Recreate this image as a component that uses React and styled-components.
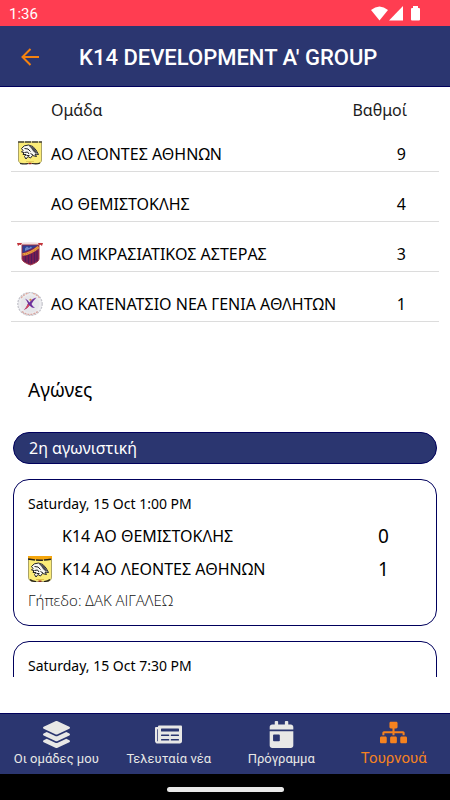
import React from "react";
import styled, { createGlobalStyle } from "styled-components";
import { FaLayerGroup, FaNewspaper, FaCalendarDay, FaSitemap } from "react-icons/fa";

const standings = [
  { team: "ΑΟ ΛΕΟΝΤΕΣ ΑΘΗΝΩΝ", points: 9, crest: "lion" },
  { team: "ΑΟ ΘΕΜΙΣΤΟΚΛΗΣ", points: 4 },
  { team: "ΑΟ ΜΙΚΡΑΣΙΑΤΙΚΟΣ ΑΣΤΕΡΑΣ", points: 3, crest: "shield" },
  { team: "ΑΟ ΚΑΤΕΝΑΤΣΙΟ ΝΕΑ ΓΕΝΙΑ ΑΘΛΗΤΩΝ", points: 1, crest: "round" },
];

const matches = [
  {
    date: "Saturday, 15 Oct 1:00 PM",
    venue: "Γήπεδο: ΔΑΚ ΑΙΓΑΛΕΩ",
    sides: [
      { team: "Κ14 ΑΟ ΘΕΜΙΣΤΟΚΛΗΣ", score: 0 },
      { team: "Κ14 ΑΟ ΛΕΟΝΤΕΣ ΑΘΗΝΩΝ", score: 1, crest: "lionTall" },
    ],
  },
  { date: "Saturday, 15 Oct 7:30 PM", sides: [] },
];

const tabs = [
  { label: "Οι ομάδες μου", Icon: FaLayerGroup },
  { label: "Τελευταία νέα", Icon: FaNewspaper },
  { label: "Πρόγραμμα", Icon: FaCalendarDay },
  { label: "Τουρνουά", Icon: FaSitemap, active: true },
];

const LionHead = () => (
  <g strokeLinejoin="round">
    <path
      d="M4 8 Q6 4.500 11 4.500 Q16 5 18.500 9.500 L21 14 L17.500 13.500 L19 16 L15 15 L13 17.500 L10.500 16 L8.500 18.500 L7 16 L8.500 14 L5.500 14 L6.500 12 L4 11.500 L5.500 10 Z"
      fill="#f7f7f2"
      stroke="#222226"
      strokeWidth="1"
    />
    <path
      d="M11 5 Q15.500 5.500 18 9.500 L20 13 Q17 12.500 15.500 10.500 Q14 7.500 11 5 Z"
      fill="#4b4c50"
    />
    <path
      d="M7 8 L10.500 8.500 L13 11 M7 12 L10 11.500 L11.500 13.500 M9 15 L12 15 M13 13 L15.500 14.500"
      fill="none"
      stroke="#222226"
      strokeWidth="1"
    />
  </g>
);

const Crest = ({ kind }) => {
  if (kind === "lion") {
    return (
      <svg width="26" height="24" viewBox="0 0 26 24" aria-hidden="true">
        <path d="M1.500 1 H24.500 V19 Q24.500 22.500 20 22.500 H6 Q1.500 22.500 1.500 19 Z" fill="#fbec78" stroke="#aaa266" />
        <path d="M1 1 H25" stroke="#4c4a3a" strokeWidth="1.500" strokeDasharray="6 1" />
        <g transform="translate(.5 -.5)">
          <LionHead />
        </g>
        <path d="M3 22.500 Q8 23.500 11 22.500 M15 22.500 Q20 23.500 23 22" stroke="#27251c" strokeWidth="1.200" fill="none" />
        <path d="M9 20.500 H17" stroke="#e3cf5a" />
        <path d="M11.500 22.500 H14.500" stroke="#8c1f1a" strokeWidth="1.500" />
      </svg>
    );
  }
  if (kind === "lionTall") {
    return (
      <svg width="24" height="26" viewBox="0 0 24 26" aria-hidden="true">
        <path d="M.5 .5 H23.500 V21 Q23.500 25.500 18 25.500 H6 Q.5 25.500 .5 21 Z" fill="#fbec78" stroke="#aaa266" />
        <path d="M0 0 H24 V3 Q12 5 0 3 Z" fill="#f5a60c" />
        <path d="M0 3 Q12 5.500 24 3" stroke="#26231a" strokeWidth="1.500" fill="none" strokeDasharray="7 1" />
        <g transform="translate(-.5 2.500)">
          <LionHead />
        </g>
        <path d="M2 23.500 Q4 25.500 8 25.500 M16 25.500 Q20 25.500 22 23.500" stroke="#27251c" strokeWidth="1.200" fill="none" />
        <path d="M8 23.500 H16" stroke="#e0bf48" />
        <path d="M10.500 25.200 H13.500" stroke="#8c1f1a" strokeWidth="1.400" />
      </svg>
    );
  }
  if (kind === "shield") {
    return (
      <svg width="26" height="24" viewBox="0 0 26 24" aria-hidden="true">
        <path d="M0 1 Q13 -.5 26 1 L24.500 3 H1.500 Z" fill="#f0dcdc" />
        <path d="M0 1 L5 1 L4 3 L2.500 2.700 L1 4 Z M26 1 L21 1 L22 3 L23.500 2.700 L25 4 Z" fill="#c2343a" />
        <path d="M5 3 H22 V17 Q22 20 13.500 23 Q5 20 5 17 Z" fill="#7c1d52" stroke="#a33a45" />
        <path d="M5.500 3.500 H21.500 L5.500 11 Z" fill="#2e3f92" />
        <path d="M8 6.500 L10 4.500 L12 6 L14 4.500 L15 6 L8 9 Z" fill="#6f87c6" />
        <path d="M5.500 12.500 Q14 11.500 21.500 5" stroke="#e9a13e" strokeWidth="2.600" fill="none" />
        <path d="M6 12.500 Q14 11.500 21 5.500" stroke="#b5502f" strokeWidth=".7" strokeDasharray="1 1" fill="none" />
        <path d="M8.500 14 V20 M11.500 13 V21.500 M14.500 12 V21.500 M17.500 10 V20.500 M20 9 V19" stroke="#4f1c58" strokeWidth="1.200" />
      </svg>
    );
  }
  if (kind === "round") {
    return (
      <svg width="26" height="24" viewBox="0 0 26 24" aria-hidden="true">
        <ellipse cx="13" cy="12" rx="12.200" ry="11.500" fill="#ededf0" stroke="#c3c3ca" strokeWidth="1.200" strokeDasharray="2 1" />
        <path d="M4 6 Q8 1.500 12 1.200 M16 1.500 Q20 2.500 22.500 6" stroke="#dfa79c" strokeWidth="1.200" strokeDasharray="2 1" fill="none" />
        <path d="M5 19.500 Q13 25.500 21.500 19" stroke="#d8a6a0" strokeWidth="1.400" strokeDasharray="2 1" fill="none" />
        <ellipse cx="13" cy="12" rx="9.500" ry="8.800" fill="#e6e6ea" />
        <path d="M8 6.500 Q11 8 12.500 10.500 Q15 6.500 19.500 5.500 Q16 9 14.500 12 Q15.500 14.500 18 16 Q14.500 16 12.500 13.500 Q10.500 16.500 7 18 Q10 14.500 11 11.500 Q10 9 8 6.500 Z" fill="#6d309b" />
        <path d="M7 18 Q10 14.500 10.800 12 L12.500 13.500 Q10.500 16.500 7 18 Z" fill="#d6485c" />
        <circle cx="13.500" cy="7.800" r="1.100" fill="#d98049" />
      </svg>
    );
  }
  return null;
};

const App = () => {
  return (
    <>
      <GlobalStyle />
      <Screen>
        <StatusBar>
          <span>1:36</span>
          <StatusIcons viewBox="0 0 50 16" aria-hidden="true">
            <path d="M0 4 Q8.500 -3 17 4 L8.500 14.500 Z" />
            <path d="M32 0 V14.500 H18 Z" />
            <path d="M42 0 H47 V2 H48 Q49 2 49 3 V13.500 Q49 14.500 48 14.500 H41 Q40 14.500 40 13.500 V3 Q40 2 41 2 H42 Z" />
          </StatusIcons>
        </StatusBar>
        <Header>
          <BackButton type="button" aria-label="Back">
            <svg width="20" height="20" viewBox="0 0 20 20" aria-hidden="true">
              <path d="M19 9 H2.500 M10.500 1 L2.500 9 L10.500 17" />
            </svg>
          </BackButton>
          <Title>K14 DEVELOPMENT A' GROUP</Title>
        </Header>

        <Content>
          <Table>
            <colgroup>
              <CrestCol />
              <col />
              <PointsCol />
            </colgroup>
            <thead>
              <tr>
                <HeadCell colSpan={2}>Ομάδα</HeadCell>
                <HeadCell $right>Βαθμοί</HeadCell>
              </tr>
            </thead>
            <tbody>
              {standings.map((row) => (
                <tr key={row.team}>
                  <CrestCell>
                    <Crest kind={row.crest} />
                  </CrestCell>
                  <Cell>{row.team}</Cell>
                  <Cell $right>{row.points}</Cell>
                </tr>
              ))}
            </tbody>
          </Table>

          <SectionTitle>Αγώνες</SectionTitle>
          <MatchList>
            <Round>2η αγωνιστική</Round>
            {matches.map((match) => (
              <MatchCard key={match.date}>
                <MatchDate>{match.date}</MatchDate>
                {match.sides.map((side) => (
                  <Side key={side.team}>
                    <Crest kind={side.crest} />
                    <SideName>{side.team}</SideName>
                    <Score>{side.score}</Score>
                  </Side>
                ))}
                {match.venue && <Venue>{match.venue}</Venue>}
              </MatchCard>
            ))}
          </MatchList>
        </Content>

        <TabBar>
          {tabs.map(({ label, Icon, active }) => (
            <Tab key={label} type="button" $active={active}>
              <IconBox $active={active}>
                <Icon />
              </IconBox>
              {label}
            </Tab>
          ))}
        </TabBar>
        <GestureBar>
          <Handle />
        </GestureBar>
      </Screen>
    </>
  );
};

export default App;

const GlobalStyle = createGlobalStyle`
  * {
    box-sizing: border-box;
  }
  body {
    margin: 0;
    background: #fff;
    color: #000;
    font-family: "Noto Sans", "Open Sans", sans-serif;
  }
  button {
    border: 0;
    padding: 0;
    background: none;
    font-family: Roboto, "Noto Sans", sans-serif;
    cursor: pointer;
  }
`;

const Screen = styled.div`
  display: flex;
  flex-direction: column;
  height: 100vh;
`;

const StatusBar = styled.div`
  display: flex;
  flex: none;
  align-items: center;
  justify-content: space-between;
  height: 26px;
  padding: 2px 29px 0 9px;
  background: #ff3d51;
  color: #fff;
  font-family: Roboto, sans-serif;
  font-size: 15px;
`;

const StatusIcons = styled.svg`
  width: 50px;
  height: 16px;
  fill: #fff;
`;

const Header = styled.header`
  display: flex;
  flex: none;
  align-items: center;
  gap: 39px;
  height: 61px;
  padding: 4px 20px 0;
  background: #2b3670;
  border-bottom: 1px solid #00005c;
`;

const BackButton = styled.button`
  display: flex;

  svg {
    fill: none;
    stroke: #f5820f;
    stroke-width: 2;
  }
`;

const Title = styled.h1`
  margin: 0;
  color: #fff;
  font-family: Roboto, sans-serif;
  font-size: 22px;
  font-weight: 500;
  line-height: 28px;
  white-space: nowrap;
`;

const Content = styled.main`
  flex: 1;
  min-height: 0;
  margin-bottom: 36px;
  overflow-y: auto;
  scrollbar-width: none;
`;

const Table = styled.table`
  width: calc(100% - 22px);
  margin: 0 11px;
  border-collapse: collapse;
  table-layout: fixed;
  font-size: 16px;
  line-height: 22px;
`;

const CrestCol = styled.col`
  width: 40px;
`;

const PointsCol = styled.col`
  width: 90px;
`;

const HeadCell = styled.th`
  height: 34px;
  padding: ${({ $right }) => ($right ? "12px 32px 0 0" : "12px 0 0 40px")};
  color: #1c1c1c;
  font-weight: 400;
  text-align: ${({ $right }) => ($right ? "right" : "left")};
`;

const Cell = styled.td`
  height: 50px;
  padding: ${({ $right }) => ($right ? "16px 33px 0 0" : "16px 0 0")};
  border-bottom: 1px solid #dcdcdc;
  text-align: ${({ $right }) => ($right ? "right" : "left")};
  white-space: nowrap;
`;

const CrestCell = styled(Cell)`
  padding: 15px 0 0 6px;

  svg {
    display: block;
  }
`;

const SectionTitle = styled.h2`
  margin: 54px 28px 28px;
  font-size: 19px;
  font-weight: 400;
  line-height: 28px;
`;

const MatchList = styled.section`
  display: flex;
  flex-direction: column;
  gap: 15px;
  padding: 0 13px;
`;

const Round = styled.h3`
  margin: 0;
  padding: 0 15px;
  background: #2b3670;
  border: 1px solid #00005c;
  border-radius: 16px;
  color: #fff;
  font-size: 16px;
  font-weight: 400;
  line-height: 30px;
`;

const MatchCard = styled.article`
  min-height: 147px;
  padding: 12px 14px 11px;
  border: 1px solid #00005c;
  border-radius: 16px;
`;

const MatchDate = styled.div`
  margin-bottom: 4px;
  font-size: 14px;
  line-height: 24px;
`;

const Side = styled.div`
  display: grid;
  grid-template-columns: 34px 1fr 44px;
  align-items: center;
  height: 33px;
`;

const SideName = styled.span`
  grid-column: 2;
  font-size: 16px;
`;

const Score = styled.span`
  font-size: 19px;
`;

const Venue = styled.div`
  color: #111;
  font-family: "Open Sans", "Noto Sans", sans-serif;
  font-size: 15px;
  font-weight: 300;
  line-height: 28px;
`;

const TabBar = styled.nav`
  display: grid;
  grid-template-columns: repeat(4, 1fr);
  flex: none;
  height: 61px;
  background: #2b3670;
  border-top: 1px solid #00005c;
`;

const Tab = styled.button`
  display: flex;
  flex-direction: column;
  align-items: center;
  padding-top: 7px;
  color: ${({ $active }) => ($active ? "#f5821f" : "#e8e8e6")};
  font-size: ${({ $active }) => ($active ? "15px" : "13px")};
  line-height: 20px;
  white-space: nowrap;
`;

const IconBox = styled.span`
  display: flex;
  align-items: center;
  height: ${({ $active }) => ($active ? "23px" : "27px")};
  margin-bottom: ${({ $active }) => ($active ? "4px" : "1px")};
  font-size: 27px;
`;

const GestureBar = styled.div`
  display: flex;
  flex: none;
  align-items: center;
  justify-content: center;
  height: 26px;
  padding-top: 4px;
  background: #000;
`;

const Handle = styled.div`
  width: 26%;
  height: 5px;
  border-radius: 3px;
  background: #e8e8e8;
`;
